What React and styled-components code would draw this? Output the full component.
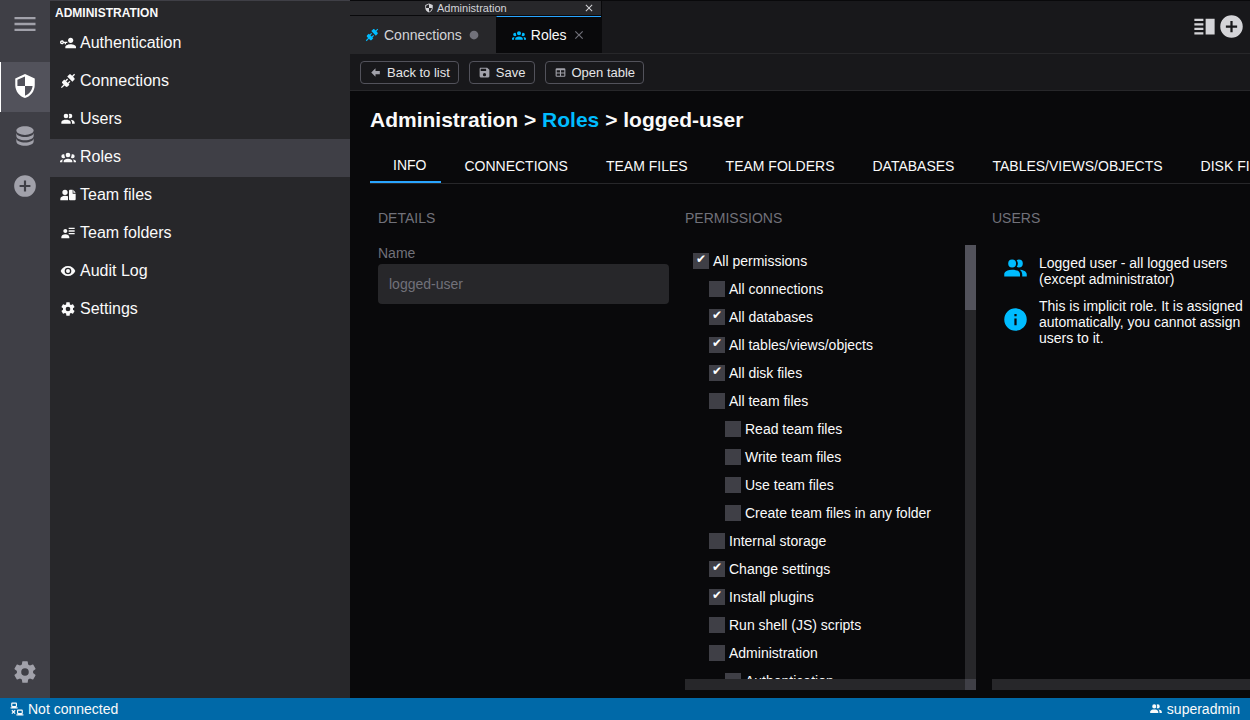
import React from 'react';
import styled, { createGlobalStyle, css } from 'styled-components';

const color = {
  page: '#09090b',
  bar: '#18181b',
  panel: '#27272a',
  raised: '#3f3f46',
  active: '#52525b',
  muted: '#71717a',
  dim: '#a1a1aa',
  soft: '#d4d4d8',
  text: '#fafafa',
  accent: '#00bcff',
  line: '#29a5ff',
  status: '#0069a8',
};

const GlobalStyle = createGlobalStyle`
  *, *::before, *::after { box-sizing: border-box; }
  html, body, #root { height: 100%; margin: 0; }
  body {
    background: ${color.page};
    color: ${color.text};
    font-family: "Liberation Sans", Arial, sans-serif;
    font-size: 14px;
    line-height: 16px;
    overflow: hidden;
  }
  button, input { font: inherit; color: inherit; }
  button { border: 0; padding: 0; background: none; cursor: pointer; }
  ul { list-style: none; margin: 0; padding: 0; }
  h1, h2, p { margin: 0; }
`;

const paths = {
  menu: 'M3,6H21V8H3V6M3,11H21V13H3V11M3,16H21V18H3V16Z',
  security:
    'M12,12H19C18.47,16.11 15.72,19.78 12,20.92V12H5V6.3L12,3.19M12,1L3,5V11C3,16.55 6.84,21.73 12,23C17.16,21.73 21,16.55 21,11V5L12,1Z',
  database:
    'M12,3C7.58,3 4,4.79 4,7C4,9.21 7.58,11 12,11C16.42,11 20,9.21 20,7C20,4.79 16.42,3 12,3M4,9V12C4,14.21 7.58,16 12,16C16.42,16 20,14.21 20,12V9C20,11.21 16.42,13 12,13C7.58,13 4,11.21 4,9M4,14V17C4,19.21 7.58,21 12,21C16.42,21 20,19.21 20,17V14C20,16.21 16.42,18 12,18C7.58,18 4,16.21 4,14Z',
  plus: 'M17,13H13V17H11V13H7V11H11V7H13V11H17M12,2A10,10 0 0,0 2,12A10,10 0 0,0 12,22A10,10 0 0,0 22,12A10,10 0 0,0 12,2Z',
  cog: 'M12,15.5A3.5,3.5 0 0,1 8.5,12A3.5,3.5 0 0,1 12,8.5A3.5,3.5 0 0,1 15.5,12A3.5,3.5 0 0,1 12,15.5M19.43,12.97C19.47,12.65 19.5,12.33 19.5,12C19.5,11.67 19.47,11.34 19.43,11L21.54,9.37C21.73,9.22 21.78,8.95 21.66,8.73L19.66,5.27C19.54,5.05 19.27,4.96 19.05,5.05L16.56,6.05C16.04,5.66 15.5,5.32 14.87,5.07L14.5,2.42C14.46,2.18 14.25,2 14,2H10C9.75,2 9.54,2.18 9.5,2.42L9.13,5.07C8.5,5.32 7.96,5.66 7.44,6.05L4.95,5.05C4.73,4.96 4.46,5.05 4.34,5.27L2.34,8.73C2.21,8.95 2.27,9.22 2.46,9.37L4.57,11C4.53,11.34 4.5,11.67 4.5,12C4.5,12.33 4.53,12.65 4.57,12.97L2.46,14.63C2.27,14.78 2.21,15.05 2.34,15.27L4.34,18.73C4.46,18.95 4.73,19.03 4.95,18.95L7.44,17.94C7.96,18.34 8.5,18.68 9.13,18.93L9.5,21.58C9.54,21.82 9.75,22 10,22H14C14.25,22 14.46,21.82 14.5,21.58L14.87,18.93C15.5,18.67 16.04,18.34 16.56,17.94L19.05,18.95C19.27,19.03 19.54,18.95 19.66,18.73L21.66,15.27C21.78,15.05 21.73,14.78 21.54,14.63L19.43,12.97Z',
  users:
    'M16 17V19H2V17S2 13 9 13 16 17 16 17M12.5 7.5A3.5 3.5 0 1 0 9 11A3.5 3.5 0 0 0 12.5 7.5M15.94 13A5.32 5.32 0 0 1 18 17V19H22V17S22 13.37 15.94 13M15 4A3.39 3.39 0 0 0 13.07 4.59A5 5 0 0 1 13.07 10.41A3.39 3.39 0 0 0 15 11A3.5 3.5 0 0 0 15 4Z',
  group:
    'M12,5.5A3.5,3.5 0 0,1 15.5,9A3.5,3.5 0 0,1 12,12.5A3.5,3.5 0 0,1 8.5,9A3.5,3.5 0 0,1 12,5.5M5,8C5.56,8 6.08,8.15 6.53,8.42C6.38,9.85 6.8,11.27 7.66,12.38C7.16,13.34 6.16,14 5,14A3,3 0 0,1 2,11A3,3 0 0,1 5,8M19,8A3,3 0 0,1 22,11A3,3 0 0,1 19,14C17.84,14 16.84,13.34 16.34,12.38C17.2,11.27 17.62,9.85 17.47,8.42C17.92,8.15 18.44,8 19,8M5.5,18.25C5.5,16.18 8.41,14.5 12,14.5C15.59,14.5 18.5,16.18 18.5,18.25V20H5.5V18.25M0,20V18.5C0,17.11 1.89,15.94 4.45,15.6C3.86,16.28 3.5,17.22 3.5,18.25V20H0M24,20H20.5V18.25C20.5,17.22 20.14,16.28 19.55,15.6C22.11,15.94 24,17.11 24,18.5V20Z',
  teamFiles:
    'M7.5 4A4 4 0 1 1 7.5 12A4 4 0 0 1 7.5 4M7.5 13C9.4 13 11 13.4 12 14V20H0.5V17.5C0.5 15 3.6 13 7.5 13M15 4H19V10H23.5V18.5A1.5 1.5 0 0 1 22 20H15A1.5 1.5 0 0 1 13.5 18.5V5.5A1.5 1.5 0 0 1 15 4M20 4L23.5 8.7H20Z',
  details:
    'M11 9C11 10.66 9.66 12 8 12C6.34 12 5 10.66 5 9C5 7.34 6.34 6 8 6C9.66 6 11 7.34 11 9M14 20H2V18C2 15.79 4.69 14 8 14C11.31 14 14 15.79 14 18V20M22 12V14H13V12H22M22 8V10H13V8H22M22 4V6H13V4H22Z',
  eye: 'M12,9A3,3 0 0,0 9,12A3,3 0 0,0 12,15A3,3 0 0,0 15,12A3,3 0 0,0 12,9M12,17A5,5 0 0,1 7,12A5,5 0 0,1 12,7A5,5 0 0,1 17,12A5,5 0 0,1 12,17M12,4.5C7,4.5 2.73,7.61 1,12C2.73,16.39 7,19.5 12,19.5C17,19.5 21.27,16.39 23,12C21.27,7.61 17,4.5 12,4.5Z',
  key: 'M11 10V12H9V14H7V12H5.8C5.4 13.2 4.3 14 3 14C1.3 14 0 12.7 0 11S1.3 8 3 8C4.3 8 5.4 8.8 5.8 10H11M3 10C2.4 10 2 10.4 2 11S2.4 12 3 12 4 11.6 4 11 3.6 10 3 10M16 14C18.7 14 24 15.3 24 18V20H8V18C8 15.3 13.3 14 16 14M16 12C13.8 12 12 10.2 12 8S13.8 4 16 4 20 5.8 20 8 18.2 12 16 12Z',
  connection:
    'M21.4 7.5C22.2 8.3 22.2 9.6 21.4 10.3L18.6 13.1L10.8 5.3L13.6 2.5C14.4 1.7 15.7 1.7 16.4 2.5L18.2 4.3L21.2 1.3L22.6 2.7L19.6 5.7L21.4 7.5M15.6 13.3L14.2 11.9L11.4 14.7L9.3 12.6L12.1 9.8L10.7 8.4L7.9 11.2L6.4 9.8L3.6 12.6C2.8 13.4 2.8 14.7 3.6 15.4L5.4 17.2L1.4 21.2L2.8 22.6L6.8 18.6L8.6 20.4C9.4 21.2 10.7 21.2 11.4 20.4L14.2 17.6L12.8 16.2L15.6 13.3Z',
  save: 'M15,9H5V5H15M12,19A3,3 0 0,1 9,16A3,3 0 0,1 12,13A3,3 0 0,1 15,16A3,3 0 0,1 12,19M17,3H5C3.89,3 3,3.9 3,5V19A2,2 0 0,0 5,21H19A2,2 0 0,0 21,19V7L17,3Z',
  table:
    'M5,4H19A2,2 0 0,1 21,6V18A2,2 0 0,1 19,20H5A2,2 0 0,1 3,18V6A2,2 0 0,1 5,4M5,8V12H11V8H5M13,8V12H19V8H13M5,14V18H11V14H5M13,14V18H19V14H13Z',
  back: 'M20,9V15H12V19.84L4.16,12L12,4.16V9H20Z',
  close:
    'M19,6.41L17.59,5L12,10.59L6.41,5L5,6.41L10.59,12L5,17.59L6.41,19L12,13.41L17.59,19L19,17.59L13.41,12L19,6.41Z',
  dot: 'M12,4.5A7.5,7.5 0 1,0 12,19.5A7.5,7.5 0 1,0 12,4.5Z',
  info: 'M13,9H11V7H13M13,17H11V11H13M12,2A10,10 0 0,0 2,12A10,10 0 0,0 12,22A10,10 0 0,0 22,12A10,10 0 0,0 12,2Z',
  split: 'M3 5H11V7H3V5M3 9H11V11H3V9M3 13H11V15H3V13M3 17H11V19H3V17M13 5H21V19H13V5Z',
  disconnect:
    'M4,1C2.89,1 2,1.89 2,3V7C2,8.11 2.89,9 4,9H1V11H13V9H10C11.11,9 12,8.11 12,7V3C12,1.89 11.11,1 10,1H4M4,3H10V7H4V3M14,13C12.89,13 12,13.89 12,15V19C12,20.11 12.89,21 14,21H11V23H23V21H20C21.11,21 22,20.11 22,19V15C22,13.89 21.11,13 20,13H14M3.88,13.46L2.46,14.88L4.59,17L2.46,19.12L3.88,20.54L6,18.41L8.12,20.54L9.54,19.12L7.41,17L9.54,14.88L8.12,13.46L6,15.59L3.88,13.46M14,15H20V19H14V15Z',
};

const Svg = styled.svg`
  display: block;
  flex: none;
  width: ${(p) => p.$size}px;
  height: ${(p) => p.$size}px;
  fill: ${(p) => p.$color || 'currentColor'};
`;

const Icon = ({ name, size = 16, tint }) => (
  <Svg viewBox="0 0 24 24" $size={size} $color={tint} aria-hidden="true">
    <path d={paths[name]} />
  </Svg>
);

const Window = styled.div`
  display: flex;
  flex-direction: column;
  height: 100vh;
`;

const Body = styled.div`
  display: flex;
  flex: 1;
  min-height: 0;
`;

const Rail = styled.nav`
  display: flex;
  flex-direction: column;
  flex: none;
  width: 50px;
  background: ${color.raised};
`;

const RailButton = styled.button`
  display: grid;
  place-items: center;
  width: 100%;
  height: 50px;
  padding-bottom: 2px;
  color: ${(p) => (p.$active ? '#fff' : color.dim)};
  ${(p) =>
    p.$active &&
    css`
      background: ${color.active};
      border-left: 1px solid #fff;
      padding-right: 1px;
    `}
  ${(p) =>
    p.$menu &&
    css`
      margin-bottom: 12px;
    `}
  ${(p) =>
    p.$last &&
    css`
      margin-top: auto;
    `}
`;

const Sidebar = styled.aside`
  flex: none;
  width: 300px;
  background: ${color.panel};
  border-top: 1px solid ${color.raised};
`;

const SidebarTitle = styled.h2`
  padding: 4px 5px;
  font-size: 12px;
  line-height: 16px;
  font-weight: 700;
`;

const SidebarItem = styled.button`
  display: flex;
  align-items: center;
  gap: 4px;
  width: 100%;
  height: 38px;
  padding: 0 10px 2px;
  font-size: 16px;
  line-height: 18px;
  background: ${(p) => (p.$active ? color.raised : 'transparent')};
`;

const Main = styled.main`
  display: flex;
  flex-direction: column;
  flex: 1;
  min-width: 0;
`;

const TabsBar = styled.header`
  display: flex;
  justify-content: space-between;
  height: 54px;
  background: ${color.bar};
  border-top: 1px solid ${color.page};
  border-bottom: 1px solid ${color.panel};
`;

const TabGroup = styled.div`
  display: flex;
  flex-direction: column;
  border-right: 1px solid ${color.page};
`;

const GroupTitle = styled.div`
  display: grid;
  grid-template-columns: 1fr 24px;
  align-items: center;
  height: 15px;
  padding-left: 4px;
  background: ${color.panel};
  border-bottom: 1px solid ${color.page};
  color: ${color.soft};
  font-size: 11px;
  line-height: 14px;
`;

const GroupLabel = styled.span`
  display: flex;
  align-items: center;
  justify-content: center;
  gap: 3px;
`;

const CloseButton = styled.button`
  display: grid;
  place-items: center;
  color: ${(p) => (p.$muted ? color.muted : color.soft)};
`;

const TabRow = styled.div`
  display: flex;
  flex: 1;
`;

const FileTab = styled.div`
  display: flex;
  align-items: center;
  gap: 5px;
  padding: 0 15px;
  color: ${(p) => (p.$active ? color.text : color.soft)};
  background: ${(p) => (p.$active ? color.page : color.panel)};
  border-top: 1px solid ${(p) => (p.$active ? color.line : color.panel)};
  & + & { border-left: 1px solid ${color.page}; }
`;

const Tools = styled.div`
  display: flex;
  align-items: center;
  padding: 0 5px 2px 0;
  color: ${color.soft};
`;

const ToolStrip = styled.div`
  display: flex;
  gap: 10px;
  padding: 7px 10px 6px;
  background: ${color.bar};
  border-bottom: 1px solid ${color.panel};
`;

const ToolButton = styled.button`
  display: flex;
  align-items: center;
  gap: 5px;
  height: 23px;
  padding: 0 8px;
  border: 1px solid ${color.active};
  border-radius: 4px;
  font-size: 13px;
  line-height: 15px;
  color: #e4e4e7;
  svg { color: ${color.dim}; }
`;

const Content = styled.section`
  display: flex;
  flex-direction: column;
  flex: 1;
  min-height: 0;
  padding: 16px 0 8px 20px;
`;

const Crumbs = styled.h1`
  font-size: 21px;
  line-height: 26px;
  font-weight: 700;
  white-space: nowrap;
  a { color: ${color.accent}; text-decoration: none; }
`;

const PageTabs = styled.div`
  display: flex;
  flex: none;
  height: 37px;
  margin-top: 14px;
  overflow: hidden;
  border-bottom: 1px solid ${color.panel};
`;

const PageTab = styled.button`
  flex: none;
  padding: 2px 15px 0 23px;
  white-space: nowrap;
  ${(p) =>
    p.$active &&
    css`
      border-bottom: 2px solid ${color.line};
    `}
`;

const Columns = styled.div`
  display: grid;
  grid-template-columns: repeat(3, minmax(291px, 1fr));
  gap: 16px;
  flex: 1;
  min-height: 0;
  margin-right: -33px;
  padding: 26px 8px 0;
`;

const Column = styled.section`
  display: flex;
  flex-direction: column;
  min-height: 0;
`;

const ColumnTitle = styled.h2`
  color: ${color.muted};
  font-size: 14px;
  line-height: 16px;
  font-weight: 400;
  text-transform: uppercase;
`;

const Field = styled.label`
  display: flex;
  flex-direction: column;
  gap: 3px;
  margin-top: 19px;
  color: ${color.muted};
`;

const TextInput = styled.input`
  width: 100%;
  height: 40px;
  padding: 0 11px;
  border: 0;
  border-radius: 4px;
  background: ${color.panel};
  color: ${color.muted};
`;

const ScrollFrame = styled.div`
  display: grid;
  grid-template-columns: minmax(0, 1fr) auto;
  grid-template-rows: minmax(0, 1fr) 11px;
  flex: 1;
  min-height: 0;
  margin-top: 19px;
`;

const ScrollBody = styled.div`
  overflow: hidden;
  padding: ${(p) => (p.$wide ? '10px 8px' : '2px 8px')};
`;

const Track = styled.div`
  width: 11px;
  background: ${color.panel};
`;

const Thumb = styled.div`
  height: 65px;
  background: ${color.active};
`;

const BottomTrack = styled.div`
  grid-row: 2;
  background: ${color.panel};
`;

const Corner = styled.div`
  background: ${color.raised};
`;

const Permission = styled.label`
  display: flex;
  align-items: center;
  gap: 4px;
  height: 28px;
  padding-left: ${(p) => p.$depth * 16}px;
  white-space: nowrap;
`;

const CheckBox = styled.input`
  appearance: none;
  display: grid;
  justify-content: center;
  align-content: start;
  width: 16px;
  height: 16px;
  margin: 0;
  background: ${color.raised};
  &:checked::after {
    content: "✔";
    font-family: "DejaVu Sans", sans-serif;
    font-size: 12px;
    line-height: 13px;
    color: #fff;
  }
`;

const Note = styled.div`
  display: flex;
  align-items: center;
  gap: 10px;
  padding: 0 2px;
  & + & { margin-top: 11px; }
  svg { margin-bottom: 5px; }
`;

const StatusBar = styled.footer`
  display: flex;
  justify-content: space-between;
  align-items: center;
  flex: none;
  height: 22px;
  padding: 0 10px;
  background: ${color.status};
`;

const StatusItem = styled.span`
  display: flex;
  align-items: center;
  gap: 4px;
`;

const sidebarItems = [
  ['key', 'Authentication'],
  ['connection', 'Connections'],
  ['users', 'Users'],
  ['group', 'Roles'],
  ['teamFiles', 'Team files'],
  ['details', 'Team folders'],
  ['eye', 'Audit Log'],
  ['cog', 'Settings'],
];

const pageTabs = [
  'INFO',
  'CONNECTIONS',
  'TEAM FILES',
  'TEAM FOLDERS',
  'DATABASES',
  'TABLES/VIEWS/OBJECTS',
  'DISK FILES',
];

const permissions = [
  ['All permissions', 0, true],
  ['All connections', 1, false],
  ['All databases', 1, true],
  ['All tables/views/objects', 1, true],
  ['All disk files', 1, true],
  ['All team files', 1, false],
  ['Read team files', 2, false],
  ['Write team files', 2, false],
  ['Use team files', 2, false],
  ['Create team files in any folder', 2, false],
  ['Internal storage', 1, false],
  ['Change settings', 1, true],
  ['Install plugins', 1, true],
  ['Run shell (JS) scripts', 1, false],
  ['Administration', 1, false],
  ['Authentication', 2, false],
];

export default function App() {
  return (
    <Window>
      <GlobalStyle />
      <Body>
        <Rail aria-label="Widgets">
          <RailButton $menu aria-label="Menu"><Icon name="menu" size={28} /></RailButton>
          <RailButton $active aria-label="Administration"><Icon name="security" size={26} /></RailButton>
          <RailButton aria-label="Databases"><Icon name="database" size={26} /></RailButton>
          <RailButton aria-label="Add"><Icon name="plus" size={26} /></RailButton>
          <RailButton $last aria-label="Settings"><Icon name="cog" size={26} /></RailButton>
        </Rail>
        <Sidebar>
          <SidebarTitle>ADMINISTRATION</SidebarTitle>
          <ul>
            {sidebarItems.map(([icon, label]) => (
              <li key={label}>
                <SidebarItem $active={label === 'Roles'}>
                  <Icon name={icon} />
                  {label}
                </SidebarItem>
              </li>
            ))}
          </ul>
        </Sidebar>
        <Main>
          <TabsBar>
            <TabGroup>
              <GroupTitle>
                <GroupLabel><Icon name="security" size={10} />Administration</GroupLabel>
                <CloseButton aria-label="Close group"><Icon name="close" size={12} /></CloseButton>
              </GroupTitle>
              <TabRow>
                <FileTab>
                  <Icon name="connection" size={14} tint={color.accent} />
                  Connections
                  <CloseButton $muted aria-label="Close Connections"><Icon name="dot" size={14} /></CloseButton>
                </FileTab>
                <FileTab $active>
                  <Icon name="group" size={14} tint={color.accent} />
                  Roles
                  <CloseButton $muted aria-label="Close Roles"><Icon name="close" size={14} /></CloseButton>
                </FileTab>
              </TabRow>
            </TabGroup>
            <Tools>
              <button aria-label="Split view"><Icon name="split" size={27} /></button>
              <button aria-label="New tab"><Icon name="plus" size={27} /></button>
            </Tools>
          </TabsBar>
          <ToolStrip>
            <ToolButton><Icon name="back" size={13} />Back to list</ToolButton>
            <ToolButton><Icon name="save" size={13} />Save</ToolButton>
            <ToolButton><Icon name="table" size={13} />Open table</ToolButton>
          </ToolStrip>
          <Content>
            <Crumbs>Administration &gt; <a href="#roles">Roles</a> &gt; logged-user</Crumbs>
            <PageTabs role="tablist">
              {pageTabs.map((label) => (
                <PageTab key={label} role="tab" $active={label === 'INFO'}>{label}</PageTab>
              ))}
            </PageTabs>
            <Columns>
              <Column>
                <ColumnTitle>Details</ColumnTitle>
                <Field>
                  Name
                  <TextInput defaultValue="logged-user" disabled />
                </Field>
              </Column>
              <Column>
                <ColumnTitle>Permissions</ColumnTitle>
                <ScrollFrame>
                  <ScrollBody>
                    {permissions.map(([label, depth, checked]) => (
                      <Permission key={label} $depth={depth}>
                        <CheckBox type="checkbox" defaultChecked={checked} />
                        {label}
                      </Permission>
                    ))}
                  </ScrollBody>
                  <Track><Thumb /></Track>
                  <BottomTrack />
                  <Corner />
                </ScrollFrame>
              </Column>
              <Column>
                <ColumnTitle>Users</ColumnTitle>
                <ScrollFrame>
                  <ScrollBody $wide>
                    <Note>
                      <Icon name="users" size={27} tint={color.accent} />
                      <p>Logged user - all logged users (except administrator)</p>
                    </Note>
                    <Note>
                      <Icon name="info" size={27} tint={color.accent} />
                      <p>This is implicit role. It is assigned automatically, you cannot assign users to it.</p>
                    </Note>
                  </ScrollBody>
                  <BottomTrack />
                </ScrollFrame>
              </Column>
            </Columns>
          </Content>
        </Main>
      </Body>
      <StatusBar>
        <StatusItem><Icon name="disconnect" size={14} />Not connected</StatusItem>
        <StatusItem><Icon name="users" size={14} />superadmin</StatusItem>
      </StatusBar>
    </Window>
  );
}
